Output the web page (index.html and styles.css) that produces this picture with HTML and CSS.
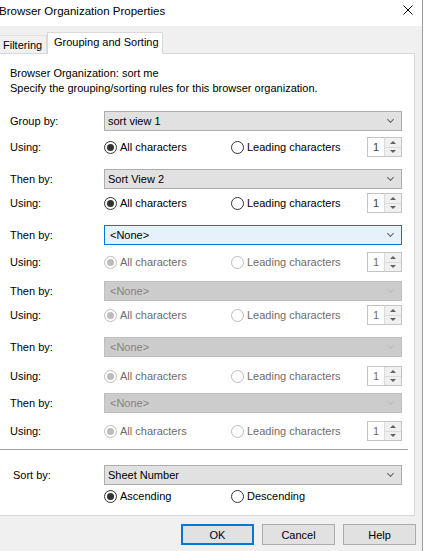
FILE: index.html
```html
<!DOCTYPE html>
<html>
<head>
<meta charset="utf-8">
<link rel="stylesheet" href="styles.css">
</head>
<body>
<div class="window">
  <div class="titlebar">
    <span class="title">Browser Organization Properties</span>
    <svg class="close" width="10" height="10" viewBox="0 0 10 10"><path d="M0.5 0.5 L9.5 9.5 M9.5 0.5 L0.5 9.5" stroke="#000" stroke-width="1" fill="none"/></svg>
  </div>
  <div class="client">
    <div class="tabs">
      <div class="tab">Filtering</div>
      <div class="tab active">Grouping and Sorting</div>
      <div class="tab-fill"></div>
    </div>
    <div class="panel">
      <div class="info">
        <div>Browser Organization: sort me</div>
        <div>Specify the grouping/sorting rules for this browser organization.</div>
      </div>

      <div class="group first">
        <div class="sel-row"><span class="label">Group by:</span><div class="select"><span>sort view 1</span><span class="chev"></span></div></div>
        <div class="use-row t6"><span class="label">Using:</span>
          <div class="opt"><span class="radio on"></span>All characters</div>
          <div class="opt"><span class="radio"></span>Leading characters</div>
          <div class="spin"><span class="spin-val">1</span><span class="spin-btns"><span class="spin-btn"><span class="up"></span></span><span class="spin-btn"><span class="down"></span></span></span></div>
        </div>
      </div>

      <div class="group g12">
        <div class="sel-row"><span class="label">Then by:</span><div class="select"><span>Sort View 2</span><span class="chev"></span></div></div>
        <div class="use-row t4"><span class="label">Using:</span>
          <div class="opt"><span class="radio on"></span>All characters</div>
          <div class="opt"><span class="radio"></span>Leading characters</div>
          <div class="spin"><span class="spin-val">1</span><span class="spin-btns"><span class="spin-btn"><span class="up"></span></span><span class="spin-btn"><span class="down"></span></span></span></div>
        </div>
      </div>

      <div class="group g12">
        <div class="sel-row"><span class="label">Then by:</span><div class="select focus"><span>&lt;None&gt;</span><span class="chev"></span></div></div>
        <div class="use-row t7 off"><span class="label">Using:</span>
          <div class="opt"><span class="radio on"></span>All characters</div>
          <div class="opt"><span class="radio"></span>Leading characters</div>
          <div class="spin"><span class="spin-val">1</span><span class="spin-btns"><span class="spin-btn"><span class="up"></span></span><span class="spin-btn"><span class="down"></span></span></span></div>
        </div>
      </div>

      <div class="group g9">
        <div class="sel-row"><span class="label">Then by:</span><div class="select disabled"><span>&lt;None&gt;</span><span class="chev"></span></div></div>
        <div class="use-row t4 off"><span class="label">Using:</span>
          <div class="opt"><span class="radio on"></span>All characters</div>
          <div class="opt"><span class="radio"></span>Leading characters</div>
          <div class="spin"><span class="spin-val">1</span><span class="spin-btns"><span class="spin-btn"><span class="up"></span></span><span class="spin-btn"><span class="down"></span></span></span></div>
        </div>
      </div>

      <div class="group g12">
        <div class="sel-row"><span class="label">Then by:</span><div class="select disabled"><span>&lt;None&gt;</span><span class="chev"></span></div></div>
        <div class="use-row t9 off"><span class="label">Using:</span>
          <div class="opt"><span class="radio on"></span>All characters</div>
          <div class="opt"><span class="radio"></span>Leading characters</div>
          <div class="spin"><span class="spin-val">1</span><span class="spin-btns"><span class="spin-btn"><span class="up"></span></span><span class="spin-btn"><span class="down"></span></span></span></div>
        </div>
      </div>

      <div class="group g7">
        <div class="sel-row"><span class="label">Then by:</span><div class="select disabled"><span>&lt;None&gt;</span><span class="chev"></span></div></div>
        <div class="use-row t8 off"><span class="label">Using:</span>
          <div class="opt"><span class="radio on"></span>All characters</div>
          <div class="opt"><span class="radio"></span>Leading characters</div>
          <div class="spin"><span class="spin-val">1</span><span class="spin-btns"><span class="spin-btn"><span class="up"></span></span><span class="spin-btn"><span class="down"></span></span></span></div>
        </div>
      </div>

      <div class="sep"></div>

      <div class="sel-row sort"><span class="label">Sort by:</span><div class="select"><span>Sheet Number</span><span class="chev"></span></div></div>
      <div class="order-row">
        <div class="opt"><span class="radio on"></span>Ascending</div>
        <div class="opt"><span class="radio"></span>Descending</div>
      </div>
    </div>
    <div class="buttons">
      <div class="btn default">OK</div>
      <div class="btn">Cancel</div>
      <div class="btn">Help</div>
    </div>
  </div>
</div>
</body>
</html>
```

FILE: styles.css
```css
* { box-sizing: border-box; }
html, body { margin: 0; padding: 0; }
body {
  width: 425px;
  height: 551px;
  overflow: hidden;
  background: #ffffff;
  font-family: "Liberation Sans", Arial, sans-serif;
  font-size: 11px;
  color: #000;
}
.window {
  width: 423px;
  height: 551px;
  background: #f0f0f0;
  border-right: 1px solid #9a9a9a;
  display: flex;
  flex-direction: column;
}
.titlebar {
  height: 26px;
  flex: none;
  background: #fff;
  display: flex;
  align-items: flex-start;
  justify-content: space-between;
  padding-right: 9px;
}
.title {
  font-size: 11.5px;
  line-height: 14px;
  margin-left: -1px;
  padding-top: 4px;
}
.close { margin-top: 5px; display: block; }
.client { flex: 1; display: flex; flex-direction: column; }
.tabs {
  height: 28px;
  flex: none;
  display: flex;
  align-items: flex-end;
}
.tab {
  height: 19px;
  width: 47px;
  padding-left: 3px;
  border-right: 1px solid #d9d9d9;
  border-top: 1px solid #e3e3e3;
  border-bottom: 1px solid #d9d9d9;
  display: flex;
  align-items: center;
  line-height: 14px;
}
.tab.active {
  height: 22px;
  width: 116px;
  padding-left: 6px;
  background: #fff;
  border-left: 1px solid #d9d9d9;
  border-top: 1px solid #d9d9d9;
  border-bottom: none;
  padding-bottom: 3px;
}
.tab-fill {
  width: 252px;
  height: 1px;
  background: #d9d9d9;
}
.panel {
  width: 415px;
  height: 462px;
  flex: none;
  background: #fff;
  border-right: 1px solid #d9d9d9;
  border-bottom: 1px solid #d9d9d9;
  padding-top: 12px;
}
.info { padding-left: 10px; line-height: 15px; }
.group.first { margin-top: 15px; }
.group.g12 { margin-top: 12px; }
.group.g9 { margin-top: 9px; }
.group.g7 { margin-top: 7px; }
.sel-row {
  display: grid;
  grid-template-columns: 104px 298px;
  height: 20px;
  align-items: center;
}
.label { padding-left: 10px; }
.sort .label { padding-left: 13px; }
.select {
  height: 20px;
  background: #e1e1e1;
  border: 1px solid #adadad;
  display: flex;
  align-items: center;
  justify-content: space-between;
  padding: 0 8px 0 3px;
}
.select.focus { background: #e5f1fb; border-color: #0078d7; }
.select.focus span:first-child { padding-left: 2px; }
.select.disabled { background: #cccccc; border-color: #bfbfbf; color: #838383; }
.select.disabled span:first-child { padding-left: 2px; }
.chev {
  width: 5px;
  height: 5px;
  border-right: 1px solid #606060;
  border-bottom: 1px solid #606060;
  transform: rotate(45deg);
  margin-top: -3px;
}
.select.disabled .chev { border-color: #bfbfbf; }
.use-row {
  display: grid;
  grid-template-columns: 104px 127px 136px 35px;
  height: 20px;
  align-items: center;
}
.use-row.t4 { margin-top: 4px; }
.use-row.t6 { margin-top: 6px; }
.use-row.t7 { margin-top: 7px; }
.use-row.t8 { margin-top: 8px; }
.use-row.t9 { margin-top: 9px; }
.opt { display: flex; align-items: center; }
.radio {
  width: 13px;
  height: 13px;
  border: 1px solid #333;
  border-radius: 50%;
  margin-right: 3px;
  display: flex;
  align-items: center;
  justify-content: center;
  background: #fff;
  flex: none;
}
.radio.on::after {
  content: "";
  width: 7px;
  height: 7px;
  border-radius: 50%;
  background: #333;
}
.off .opt { color: #6d6d6d; }
.off .radio { border-color: #bcbcbc; }
.off .radio.on::after { background: #bcbcbc; }
.spin {
  width: 35px;
  height: 20px;
  border: 1px solid #c4c4c4;
  display: flex;
  background: #fff;
}
.spin-val {
  flex: 1;
  padding-left: 5px;
  display: flex;
  align-items: center;
  color: #444;
}
.off .spin-val { color: #6d6d6d; }
.spin-btns {
  width: 17px;
  display: flex;
  flex-direction: column;
  border-left: 1px solid #dcdcdc;
}
.spin-btn {
  flex: 1;
  display: flex;
  align-items: center;
  justify-content: center;
  background: #f0f0f0;
}
.spin-btn + .spin-btn { border-top: 1px solid #dcdcdc; }
.up {
  width: 0; height: 0;
  border-left: 3px solid transparent;
  border-right: 3px solid transparent;
  border-bottom: 3px solid #606060;
}
.down {
  width: 0; height: 0;
  border-left: 3px solid transparent;
  border-right: 3px solid transparent;
  border-top: 3px solid #606060;
}
.sep {
  width: 408px;
  height: 1px;
  background: #a0a0a0;
  margin-top: 8px;
}
.sel-row.sort { margin-top: 15px; }
.order-row {
  display: grid;
  grid-template-columns: 127px 136px;
  margin-left: 104px;
  margin-top: 4px;
  height: 14px;
  align-items: center;
}
.buttons {
  display: flex;
  justify-content: flex-end;
  gap: 8px;
  padding-right: 6px;
  margin-top: 8px;
}
.btn {
  width: 73px;
  height: 21px;
  background: #e1e1e1;
  border: 1px solid #adadad;
  display: flex;
  align-items: center;
  justify-content: center;
}
.btn.default { border: 2px solid #0078d7; }
```
